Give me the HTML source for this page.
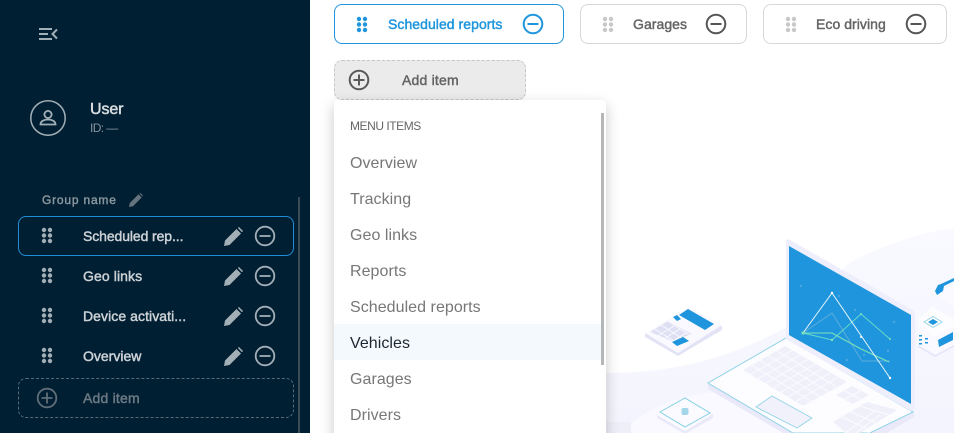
<!DOCTYPE html>
<html><head><meta charset="utf-8">
<style>
html,body{margin:0;padding:0;width:954px;height:433px;overflow:hidden;background:#fff;font-family:"Liberation Sans",sans-serif}
#wrap{position:relative;width:954px;height:433px;overflow:hidden;background:#fff}
.a{position:absolute;white-space:nowrap}
#side{position:absolute;left:0;top:0;width:310px;height:433px;background:#011f33}
.box{position:absolute;box-sizing:border-box;border-radius:8px}
.st{color:#cdd2d6;font-size:14px;line-height:20px;letter-spacing:.1px;-webkit-text-stroke:.45px currentColor}
.ti{font-size:14px;line-height:20px;letter-spacing:.05px;color:#646464;-webkit-text-stroke:.45px currentColor}
.mi{position:absolute;left:350px;color:#777;font-size:16px;line-height:20px;letter-spacing:.05px}
svg{position:absolute;overflow:visible}
</style></head><body><div id="wrap">
<svg style="left:0;top:0" width="954" height="433" viewBox="0 0 954 433">
 <defs><linearGradient id="g" x1="0" y1="0" x2="0" y2="1"><stop offset="0" stop-color="#f9f9ff"/><stop offset="1" stop-color="#f4f4fe"/></linearGradient></defs>
 <path d="M606 373C690 373 745 350 790 325L847 265C880 245 920 233 954 228V433H606Z" fill="url(#g)"/>
 <path d="M606 422H631V433H606Z" fill="#efeffa"/>
 <path d="M631 433V424C650 405 690 392 730 392L800 433Z" fill="#f9f9ff"/>
 <!-- calculator -->
 <path d="M645 334V337L678 356 722 330V326Z" fill="#e3e3f6"/>
 <path d="M645 333 690 307 722 325 678 353Z" fill="#f9f9ff"/>
 <path d="M650 332 668 321 692 334 672 341Z" fill="#e0e0f4"/>
 <path d="M650 332 672 345M655 329 677 343M661 325 683 339M668 321 690 335M656 337 674 326M662 340 680 329M668 344 686 333" stroke="#f9f9ff" stroke-width="1" fill="none"/>
 <path d="M679 315 688 309 714 324 705 330Z" fill="#1e95dc"/>
 <path d="M673 317 677 315 681 319 677 321Z" fill="#1e95dc"/>
 <path d="M672 342 683 337 689 341 677 346Z" fill="#1e95dc"/>
 <!-- small pad -->
 <path d="M657 415V418L685 434 713 418V414Z" fill="#e9e9f9"/>
 <path d="M657 415 685 397 713 414 685 431Z" fill="#fbfbff"/>
 <path d="M660 412 685 398 710 413 685 427Z" fill="none" stroke="#85cfe4" stroke-width="1"/>
 <rect x="681.500" y="408" width="7" height="7" fill="#a3d6e9" rx="2"/>
 <!-- laptop base -->
 <path d="M708 384V389L790 437H880L914 417V412Z" fill="#e9e9fa"/>
 <path d="M708 383 786 338 913 412 870 433H793Z" fill="#fdfdff" stroke="#8fd3e6" stroke-width="1"/>
 <path d="M743 370 785 346 847 382 803 406Z" fill="#f0f0fb"/>
 <path d="M751.400 365.200l60 36M759.800 360.400l60 36M768.200 355.600l60 36M776.600 350.800l60 36M750.500 374.500l42-24M758 379l42-24M765.500 383.500l42-24M773 388l42-24M780.500 392.500l42-24M788 397l42-24M795.500 401.500l42-24" stroke="#fbfbff" stroke-width="1" fill="none"/>
 <path d="M836 395 852 386 869 395 853 404Z" fill="#f0f0fb"/>
 <path d="M844 390.500l17 9M844 399.500l17-9" stroke="#fbfbff" fill="none"/>
 <path d="M833 422 867 402 897 410 860 433H846Z" fill="#f0f0fb"/>
 <path d="M842 417l30 14M851 412l30 13M860 406l29 9M845 433l30-22M856 433l24-18M868 433l18-13" stroke="#fbfbff" fill="none"/>
 <path d="M756 407 772 396 812 418 797 428Z" fill="#f1f1fc" stroke="#8fd3e6" stroke-width=".9"/>
 <!-- bezel -->
 <path d="M786 241Q786 238 790 240L911 309Q915 311 915 316V409L911 411 786 339Z" fill="#eeeefc"/>
 <path d="M789 246 911 315V404L789 335Z" fill="#1e95dc"/>
 <g fill="none" stroke-width="1">
  <path d="M803 333 832 313 862 361 890 361" stroke="#6cb3dc" opacity=".8"/>
  <path d="M803 333 832 340 861 314 890 339" stroke="#67dbc9" />
  <path d="M803 333 832 333 861 349 889 362" stroke="#7ee3b8"/>
  <path d="M803 333 832 293 890 378" stroke="#e9f5fc"/>
 </g>
 <g fill="#fff"><circle cx="832" cy="293" r="1.200"/><circle cx="890" cy="378" r="1.200"/><circle cx="861" cy="337" r="1"/></g>
 <g fill="#7ee3b8"><circle cx="803" cy="333" r="1.600"/><circle cx="832" cy="340" r="1.200"/><circle cx="861" cy="314" r="1"/><circle cx="890" cy="339" r="1"/></g>
 <g fill="#4aa8e2"><circle cx="801" cy="286" r="1.200"/><circle cx="839" cy="296" r="1.200"/><circle cx="855" cy="310" r="1.200"/><circle cx="894" cy="322" r="1.200"/><circle cx="847" cy="360" r="1.200"/><circle cx="888" cy="351" r="1.200"/><circle cx="864" cy="355" r="1.200"/></g>
 <!-- device -->
 <path d="M937 295 954 285V307Z" fill="#fbfbff"/>
 <path d="M918 320 932 307 954 319V345L935 355 918 345Z" fill="#f9f9ff"/>
 <path d="M918 320 933 337 954 326V319L932 307Z" fill="#fdfdff"/>
 <path d="M918 345 935 355 954 345V347L935 357 918 347Z" fill="#e6e6f8"/>
 <path d="M924 322 933 316.500 942 322 933 327.500Z" fill="#fff" stroke="#8fd3e6" stroke-width=".9"/>
 <path d="M928 322 933 319 938 322 933 325Z" fill="#1e95dc"/>
 <path d="M938 340 953 332V340L939 347Z" fill="#1e95dc"/>
 <g fill="#1e95dc"><rect x="919" y="335" width="3" height="1.500"/><rect x="919" y="339" width="3" height="1.500"/><rect x="919" y="343" width="3" height="1.500"/><rect x="925" y="338" width="3" height="1.500"/><rect x="925" y="342" width="3" height="1.500"/></g>
 <path d="M935 291 938 285 941 284 954 278V281L944 286 943 291 937 295Z" fill="#1e95dc"/>
</svg>

<!-- top chips -->
<div class="box" style="left:334px;top:4px;width:230px;height:40px;border:1px solid #1e95dc"></div>
<svg style="left:356px;top:17px" width="12" height="16" fill="#1e95dc"><circle cx="3" cy="2" r="2.200"/><circle cx="9" cy="2" r="2.200"/><circle cx="3" cy="7.500" r="2.200"/><circle cx="9" cy="7.500" r="2.200"/><circle cx="3" cy="13" r="2.200"/><circle cx="9" cy="13" r="2.200"/></svg>
<div class="a ti" style="left:388px;top:14px;color:#1e95dc">Scheduled reports</div>
<svg style="left:522px;top:14px" width="22" height="22" fill="none" stroke="#1e95dc" stroke-width="2"><circle cx="11" cy="10" r="9.300"/><path d="M5.500 10h11"/></svg>

<div class="box" style="left:580px;top:4px;width:167px;height:40px;border:1px solid #d8d8d8"></div>
<svg style="left:602px;top:17px" width="12" height="16" fill="#c8c8c8"><circle cx="3" cy="2" r="2.200"/><circle cx="9" cy="2" r="2.200"/><circle cx="3" cy="7.500" r="2.200"/><circle cx="9" cy="7.500" r="2.200"/><circle cx="3" cy="13" r="2.200"/><circle cx="9" cy="13" r="2.200"/></svg>
<div class="a ti" style="left:633px;top:14px">Garages</div>
<svg style="left:705px;top:14px" width="22" height="22" fill="none" stroke="#555" stroke-width="2"><circle cx="11" cy="10" r="9.300"/><path d="M5.500 10h11"/></svg>

<div class="box" style="left:763px;top:4px;width:184px;height:40px;border:1px solid #d8d8d8"></div>
<svg style="left:785px;top:17px" width="12" height="16" fill="#c8c8c8"><circle cx="3" cy="2" r="2.200"/><circle cx="9" cy="2" r="2.200"/><circle cx="3" cy="7.500" r="2.200"/><circle cx="9" cy="7.500" r="2.200"/><circle cx="3" cy="13" r="2.200"/><circle cx="9" cy="13" r="2.200"/></svg>
<div class="a ti" style="left:816px;top:14px">Eco driving</div>
<svg style="left:905px;top:14px" width="22" height="22" fill="none" stroke="#555" stroke-width="2"><circle cx="11" cy="10" r="9.300"/><path d="M5.500 10h11"/></svg>

<div class="box" style="left:334px;top:60px;width:192px;height:40px;border:1px dashed #c6c6c6;background:#ebebeb"></div>
<svg style="left:348px;top:69px" width="22" height="22" fill="none" stroke="#5a5a5a" stroke-width="2"><circle cx="11" cy="11" r="9.300"/><path d="M5.500 11h11M11 5.500v11"/></svg>
<div class="a ti" style="left:402px;top:70px;letter-spacing:.2px">Add item</div>

<!-- dropdown -->
<div style="position:absolute;left:334px;top:100px;width:272px;height:345px;background:#fff;border-radius:4px;box-shadow:0 5px 14px rgba(0,0,0,.22)"></div>
<div style="position:absolute;left:334px;top:324px;width:268px;height:36px;background:#f4f9fd"></div>
<div style="position:absolute;left:601px;top:113px;width:3px;height:252px;background:#b4b6b8"></div>
<div class="a" style="left:350px;top:116px;font-size:12px;line-height:20px;color:#666;letter-spacing:-.45px">MENU ITEMS</div>
<div class="a mi" style="top:152px;margin-top:2px">Overview</div>
<div class="a mi" style="top:190px">Tracking</div>
<div class="a mi" style="top:226px">Geo links</div>
<div class="a mi" style="top:262px">Reports</div>
<div class="a mi" style="top:298px">Scheduled reports</div>
<div class="a mi" style="top:334px;color:#1c2730">Vehicles</div>
<div class="a mi" style="top:370px">Garages</div>
<div class="a mi" style="top:406px">Drivers</div>

<!-- sidebar -->
<div id="side">
 <svg style="left:38px;top:27px" width="20" height="14" fill="none" stroke="#a3afb7" stroke-width="2"><path d="M1 2h13M1 7h9M1 12h13M19 2.500 14.500 7l4.500 4.500"/></svg>
 <svg style="left:30px;top:100px" width="36" height="36" fill="none" stroke="#a3afb7"><circle cx="18" cy="18" r="17.200" stroke-width="1.500"/><circle cx="18" cy="14.500" r="3.600" stroke-width="1.800"/><path d="M10.500 24.500c0-3.500 4-5 7.500-5s7.500 1.500 7.500 5z" stroke-width="1.800"/></svg>
 <div class="a" style="left:90px;top:100px;color:#d8dcdf;font-size:16px;line-height:20px;letter-spacing:-.1px;-webkit-text-stroke:.5px currentColor">User</div>
 <div class="a" style="left:90px;top:118px;color:#86939c;font-size:12px;line-height:20px;letter-spacing:-.6px">ID: —</div>

 <div class="a" style="left:42px;top:190px;color:#8c989f;font-size:12px;line-height:20px;letter-spacing:.8px;-webkit-text-stroke:.4px currentColor">Group name</div>
 <svg style="left:129px;top:193px" width="14" height="14" fill="#66747d"><path d="M0 14 .8 10 9.500 1.300 12.700 4.500 4 13.200ZM10.500.5 11.500 0 14 2.500 13.500 3.500Z"/></svg>

 <div style="position:absolute;left:298px;top:197px;width:2px;height:236px;background:#3a4a56"></div>

 <div class="box" style="left:18px;top:216px;width:276px;height:40px;border:1px solid #1e8fd6"></div>
 <div class="box" style="left:18px;top:378px;width:276px;height:40px;border:1px dashed #5a6a75"></div>

 <svg style="left:41px;top:228px" width="12" height="16" fill="#a3afb7"><circle cx="3" cy="2" r="2.200"/><circle cx="9" cy="2" r="2.200"/><circle cx="3" cy="7.500" r="2.200"/><circle cx="9" cy="7.500" r="2.200"/><circle cx="3" cy="13" r="2.200"/><circle cx="9" cy="13" r="2.200"/></svg>
 <div class="a st" style="left:83px;top:226px;letter-spacing:-.1px">Scheduled rep...</div>
 <svg style="left:224px;top:227px" width="19" height="19" fill="#a3afb7"><path d="M0 19 1 13.500 12.500 2 17 6.500 5.500 18ZM13.800 1 15 0 19 4 18 5.200Z"/></svg>
 <svg style="left:255px;top:226px" width="20" height="20" fill="none" stroke="#a3afb7" stroke-width="1.800"><circle cx="10" cy="10" r="9.300"/><path d="M4.500 10h11"/></svg>

 <svg style="left:41px;top:268px" width="12" height="16" fill="#a3afb7"><circle cx="3" cy="2" r="2.200"/><circle cx="9" cy="2" r="2.200"/><circle cx="3" cy="7.500" r="2.200"/><circle cx="9" cy="7.500" r="2.200"/><circle cx="3" cy="13" r="2.200"/><circle cx="9" cy="13" r="2.200"/></svg>
 <div class="a st" style="left:83px;top:266px">Geo links</div>
 <svg style="left:224px;top:267px" width="19" height="19" fill="#a3afb7"><path d="M0 19 1 13.500 12.500 2 17 6.500 5.500 18ZM13.800 1 15 0 19 4 18 5.200Z"/></svg>
 <svg style="left:255px;top:266px" width="20" height="20" fill="none" stroke="#a3afb7" stroke-width="1.800"><circle cx="10" cy="10" r="9.300"/><path d="M4.500 10h11"/></svg>

 <svg style="left:41px;top:308px" width="12" height="16" fill="#a3afb7"><circle cx="3" cy="2" r="2.200"/><circle cx="9" cy="2" r="2.200"/><circle cx="3" cy="7.500" r="2.200"/><circle cx="9" cy="7.500" r="2.200"/><circle cx="3" cy="13" r="2.200"/><circle cx="9" cy="13" r="2.200"/></svg>
 <div class="a st" style="left:83px;top:306px;letter-spacing:.07px">Device activati...</div>
 <svg style="left:224px;top:307px" width="19" height="19" fill="#a3afb7"><path d="M0 19 1 13.500 12.500 2 17 6.500 5.500 18ZM13.800 1 15 0 19 4 18 5.200Z"/></svg>
 <svg style="left:255px;top:306px" width="20" height="20" fill="none" stroke="#a3afb7" stroke-width="1.800"><circle cx="10" cy="10" r="9.300"/><path d="M4.500 10h11"/></svg>

 <svg style="left:41px;top:348px" width="12" height="16" fill="#a3afb7"><circle cx="3" cy="2" r="2.200"/><circle cx="9" cy="2" r="2.200"/><circle cx="3" cy="7.500" r="2.200"/><circle cx="9" cy="7.500" r="2.200"/><circle cx="3" cy="13" r="2.200"/><circle cx="9" cy="13" r="2.200"/></svg>
 <div class="a st" style="left:83px;top:346px;letter-spacing:0">Overview</div>
 <svg style="left:224px;top:347px" width="19" height="19" fill="#a3afb7"><path d="M0 19 1 13.500 12.500 2 17 6.500 5.500 18ZM13.800 1 15 0 19 4 18 5.200Z"/></svg>
 <svg style="left:255px;top:346px" width="20" height="20" fill="none" stroke="#a3afb7" stroke-width="1.800"><circle cx="10" cy="10" r="9.300"/><path d="M4.500 10h11"/></svg>

 <svg style="left:37px;top:388px" width="20" height="20" fill="none" stroke="#5f6e78" stroke-width="1.800"><circle cx="10" cy="10" r="9.300"/><path d="M4.500 10h11M10 4.500v11"/></svg>
 <div class="a st" style="left:83px;top:388px;color:#6d7a84;letter-spacing:.2px">Add item</div>
</div>
</div></body></html>
